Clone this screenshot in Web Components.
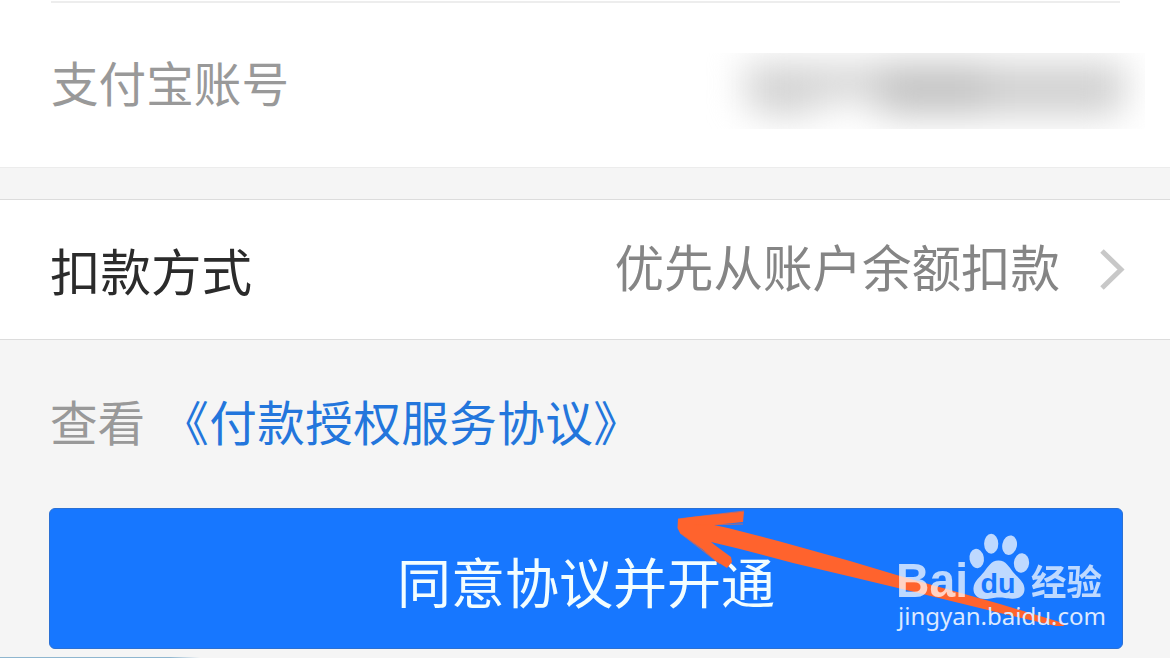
<!DOCTYPE html>
<html lang="zh-CN">
<head>
<meta charset="utf-8">
<title>付款授权</title>
<style>
    html, body {
        margin: 0;
        height: 100%;
        overflow: hidden;
    }
    body {
        font-family: "Noto Sans CJK SC", sans-serif;
        background: #f5f5f5;
    }
</style>
</head>
<body>
<pay-page>
    <pay-row class="account">
        <span slot="label">支付宝账号</span>
        <blurred-value slot="value"></blurred-value>
    </pay-row>
    <pay-row class="method" arrow>
        <span slot="label">扣款方式</span>
        <span slot="value">优先从账户余额扣款</span>
    </pay-row>
    <pay-agreement label="查看">《付款授权服务协议》</pay-agreement>
    <pay-button>同意协议并开通</pay-button>
    <pointer-arrow slot="overlay"></pointer-arrow>
    <site-mark slot="overlay"></site-mark>
</pay-page>

<script>
(function () {
    "use strict"

    function define(name, html, ready) {
        const template = document.createElement('template');
        template.innerHTML = html;

        window.customElements.define(name, class extends HTMLElement {
            constructor() {
                super();
                this._shadow = this.attachShadow({ mode: 'open' });
                this._shadow.appendChild(template.content.cloneNode(true));
            }

            connectedCallback() {
                if (ready) {
                    ready(this, this._shadow);
                }
            }
        });
    }

    define('pay-page', `
        <style>
            :host {
                display: flex;
                flex-direction: column;
                position: relative;
                box-sizing: border-box;
                width: 1170px;
                height: 658px;
                overflow: hidden;
                background: #f5f5f5;
            }
            .foot {
                width: 200px;
                height: 1px;
                margin-top: auto;
                background: linear-gradient(90deg, #8fb6cf 85%, #f5f5f5);
            }
        </style>
        <slot></slot>
        <div class="foot"></div>
        <slot name="overlay"></slot>
    `);

    define('pay-row', `
        <style>
            :host {
                display: flex;
                align-items: center;
                justify-content: space-between;
                box-sizing: border-box;
                flex: none;
                position: relative;
                background: #fff;
                white-space: nowrap;
            }
            :host(.account) {
                height: 168px;
                padding: 2px 25px 0 51px;
                border-bottom: 1px solid #ececec;
                color: #999;
                font-size: 47.6px;
            }
            :host(.account)::before {
                content: "";
                position: absolute;
                top: 1px;
                left: 51px;
                right: 50px;
                height: 2px;
                background: #ededed;
            }
            :host(.method) {
                height: 141px;
                margin-top: 31px;
                padding: 0 43px 0 50px;
                border-top: 1px solid #dcdcdc;
                border-bottom: 1px solid #dcdcdc;
                color: #2b2b2b;
                font-size: 50.5px;
            }
            .value {
                display: flex;
                align-items: center;
                gap: 37px;
                color: #858585;
                font-size: 49.5px;
            }
            :host(.account) .label {
                padding-bottom: 6px;
            }
            :host(.method) .label {
                padding-bottom: 1px;
            }
            :host(.method) .text {
                padding-bottom: 9px;
            }
            svg {
                display: none;
                width: 30px;
                height: 44px;
            }
            :host([arrow]) svg {
                display: block;
            }
        </style>
        <div class="label"><slot name="label"></slot></div>
        <div class="value">
            <div class="text"><slot name="value"></slot></div>
            <svg viewBox="0 0 30 44"><path d="M5 3L24 21.500L5 40" fill="none" stroke="#c8c8c8" stroke-width="5"/></svg>
        </div>
    `, (host, root) => {
        if (!host.hasAttribute('arrow')) {
            root.querySelector('svg').remove();
        }
    });

    define('blurred-value', `
        <style>
            :host {
                display: block;
                width: 440px;
                height: 76px;
                margin-top: 12px;
                overflow: hidden;
            }
            svg {
                display: block;
            }
        </style>
        <svg width="440" height="76" viewBox="705 53 440 76">
            <defs>
                <filter id="soft" x="-50%" y="-100%" width="200%" height="300%" color-interpolation-filters="sRGB"><feGaussianBlur stdDeviation="18 17"/></filter>
            </defs>
            <g filter="url(#soft)">
                <rect x="744" y="62" width="382" height="42" fill="#dadada"/>
                <rect x="755" y="68" width="60" height="48" fill="#d4d4d4"/>
                <rect x="880" y="62" width="112" height="54" fill="#c6c6c6"/>
                <rect x="985" y="66" width="134" height="50" fill="#d2d2d2"/>
            </g>
        </svg>
    `);

    define('pay-agreement', `
        <style>
            :host {
                display: flex;
                align-items: center;
                flex: none;
                box-sizing: border-box;
                height: 168px;
                padding: 0 0 8px 50px;
                gap: 16px;
                color: #999;
                font-size: 47.6px;
                white-space: nowrap;
            }
            a {
                color: #2376dc;
                letter-spacing: .4px;
            }
        </style>
        <span></span>
        <a><slot></slot></a>
    `, (host, root) => {
        root.querySelector('span').textContent = host.getAttribute('label');
    });

    define('pay-button', `
        <style>
            :host {
                display: block;
                flex: none;
                margin: 0 47px 0 49px;
            }
            button {
                display: flex;
                align-items: center;
                justify-content: center;
                width: 100%;
                height: 141px;
                padding: 4px 0 0;
                border: 1px solid #2b70d4;
                border-radius: 6px;
                box-sizing: border-box;
                background: #1777ff;
                color: #f2fdff;
                font: inherit;
                font-size: 54px;
            }
        </style>
        <button><slot></slot></button>
    `);

    define('pointer-arrow', `
        <style>
            :host {
                display: block;
                position: absolute;
                left: 670px;
                top: 505px;
            }
            svg {
                display: block;
            }
        </style>
        <svg width="400" height="126" viewBox="670 505 400 126">
            <path fill="#ff632d" d="M678 519L692 517L744 511.500L743 522L714 525L728 528L780 541.500L850 561L900 576L950 590L1000 604L1063 623L1064 626L1056 626L1000 613L900 588.500L850 576.500L793 563L740 549L711 542L716 546L731 557L732 562L727 568L716 561L702 549L680 533L677.500 528Z"/>
            <path fill="none" stroke="#ff632d" stroke-width=".7" d="M680 533L720 564M678 519L744 511M694 525L743 524"/>
        </svg>
    `);

    define('site-mark', `
        <style>
            :host {
                display: block;
                position: absolute;
                left: 890px;
                top: 528px;
            }
            svg {
                display: block;
            }
            .logo {
                font-family: "Liberation Sans", sans-serif;
                font-weight: bold;
            }
        </style>
        <svg width="224" height="108" viewBox="890 528 224 108">
            <g fill="#fff" opacity=".72">
                <text class="logo" x="896" y="597" font-size="47.500" textLength="72" lengthAdjust="spacingAndGlyphs">Bai</text>
                <ellipse cx="976.700" cy="558.500" rx="7.200" ry="9.700" transform="rotate(-10 976.700 558.500)"/>
                <ellipse cx="991.200" cy="543.800" rx="7.100" ry="10"/>
                <ellipse cx="1009.600" cy="545.200" rx="7.300" ry="9.800" transform="rotate(12 1009.600 545.200)"/>
                <ellipse cx="1021.500" cy="563" rx="7.600" ry="9.800" transform="rotate(5 1021.500 563)"/>
                <path d="M998.500 560.500C1006 560.500 1009 567 1013 572C1018 578 1024.500 582 1024.500 589C1024.500 596 1019 599 1012 598.700C1006 598.500 1004 597.500 999 597.500C993 597.500 991 599 985 599C977 599 973 594 973.500 588C974 581 980 577 984 572C988 567 991 560.500 998.500 560.500Z"/>
                <text x="1031" y="594.500" font-family="Noto Sans CJK SC, sans-serif" font-weight="bold" font-size="35.500" textLength="71" lengthAdjust="spacingAndGlyphs">经验</text>
            </g>
            <text class="logo" x="980.500" y="592.500" font-size="28.500" textLength="35" lengthAdjust="spacingAndGlyphs" fill="#1777ff">du</text>
            <text x="898" y="625" font-family="Noto Sans, sans-serif" font-size="24" textLength="208" lengthAdjust="spacingAndGlyphs" fill="#dce9ff">jingyan.baidu.com</text>
        </svg>
    `);

}) ();
</script>
</body>
</html>
